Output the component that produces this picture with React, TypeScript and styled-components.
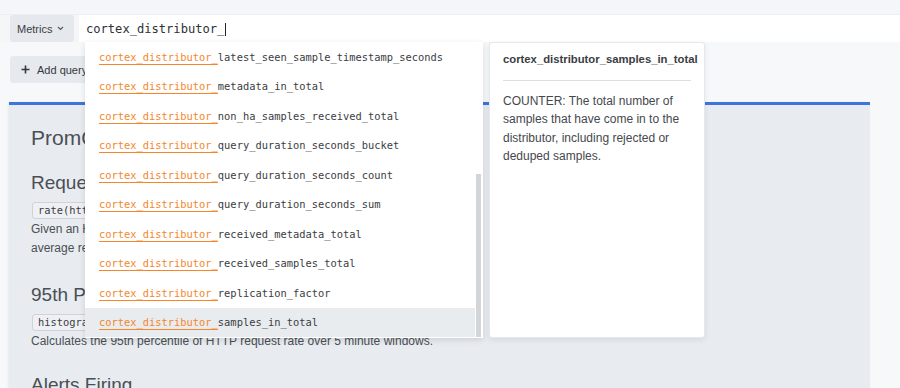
import React from 'react';
import styled, { createGlobalStyle } from 'styled-components';

const GlobalStyle = createGlobalStyle`
  html, body {
    margin: 0;
    padding: 0;
    background: #f6f8fa;
    font-family: "Liberation Sans", Arial, sans-serif;
    overflow: hidden;
  }
`;

const PREFIX = 'cortex_distributor_';

const suggestions = [
  'latest_seen_sample_timestamp_seconds',
  'metadata_in_total',
  'non_ha_samples_received_total',
  'query_duration_seconds_bucket',
  'query_duration_seconds_count',
  'query_duration_seconds_sum',
  'received_metadata_total',
  'received_samples_total',
  'replication_factor',
  'samples_in_total',
];

const Page = styled.div`
  width: 900px;
  height: 388px;
  overflow: hidden;
  background: #f6f8fa;
`;

const TopStrip = styled.div`
  height: 15px;
  background: #f4f6f9;
  border-bottom: 1px solid #eceff2;
  box-sizing: border-box;
`;

const QueryRow = styled.div`
  display: flex;
  height: 27px;
  padding-left: 10px;
  gap: 5px;
  background: #f4f6f8;
`;

const MetricsButton = styled.div`
  display: flex;
  align-items: center;
  gap: 5px;
  width: 64px;
  box-sizing: border-box;
  padding-left: 7px;
  background: #e5e8ec;
  border-radius: 3px;
  font-size: 11px;
  color: #3c4046;
`;

const InputWrap = styled.div`
  position: relative;
  flex: 1;
  background: #fff;
  display: flex;
  align-items: center;
  padding-left: 7px;
`;

const QueryText = styled.div`
  font-family: "DejaVu Sans Mono", monospace;
  font-size: 12.1px;
  color: #2e3136;
  display: flex;
  align-items: center;
`;

const Caret = styled.span`
  display: inline-block;
  width: 1px;
  height: 13px;
  background: #222;
  margin-left: 1px;
  margin-top: 2px;
`;

const Autocomplete = styled.div`
  position: absolute;
  top: 100%;
  left: 6px;
  display: flex;
  gap: 6px;
  z-index: 10;
`;

const SuggestList = styled.div`
  position: relative;
  width: 398px;
  height: 296px;
  background: #fff;
  box-shadow: 0 2px 6px rgba(0, 0, 0, 0.12);
  overflow: hidden;
`;

const Item = styled.div<{ $active?: boolean }>`
  height: 29.5px;
  display: flex;
  align-items: center;
  padding-left: 14px;
  font-family: "DejaVu Sans Mono", monospace;
  font-size: 10.4px;
  color: #3a3d42;
  background: ${(p) => (p.$active ? '#e9ecef' : '#fff')};
  margin-right: 8px;
  white-space: pre;
`;

const Match = styled.span`
  color: #f5862a;
  text-decoration: underline;
  text-decoration-color: #f5862a;
  text-decoration-thickness: 1px;
  text-underline-offset: 3px;
`;

const ScrollThumb = styled.div`
  position: absolute;
  right: 2px;
  top: 132px;
  width: 5px;
  height: 163px;
  background: #d3d6d9;
`;

const InfoCard = styled.div`
  width: 216px;
  height: 296px;
  box-sizing: border-box;
  background: #fff;
  border: 1px solid #e4e7eb;
  border-radius: 3px;
  padding: 8px 13px;
  box-shadow: 0 2px 6px rgba(0, 0, 0, 0.08);
`;

const InfoTitle = styled.div`
  font-size: 11.3px;
  font-weight: 700;
  color: #3a3d42;
  line-height: 17px;
  padding-bottom: 12px;
  border-bottom: 1px solid #dcdfe3;
  white-space: nowrap;
`;

const InfoBody = styled.div`
  margin-top: 11px;
  font-size: 12px;
  line-height: 18.3px;
  color: #45484d;
`;

const ActionBar = styled.div`
  padding: 14px 10px 19px;
`;

const AddQueryButton = styled.div`
  display: inline-flex;
  align-items: center;
  gap: 7px;
  height: 27px;
  padding: 0 14px 0 11px;
  background: #e6e9ed;
  border-radius: 3px;
  font-size: 11px;
  color: #34383d;
`;

const Panel = styled.div`
  margin-left: 9px;
  width: 861px;
  height: 300px;
  box-sizing: border-box;
  background: #e8ecf0;
  border-top: 3px solid #3b76dc;
  box-shadow: -1px 0 2px rgba(0, 0, 0, 0.06);
  padding: 20px 22px;
  color: #4b4f55;
`;

const PanelTitle = styled.h1`
  margin: 0;
  font-size: 21px;
  font-weight: 400;
  line-height: 26px;
`;

const SectionTitle = styled.h2<{ $gap: number }>`
  margin: ${(p) => p.$gap}px 0 8px;
  font-size: 19px;
  font-weight: 400;
  line-height: 23px;
`;

const Code = styled.code`
  display: block;
  width: fit-content;
  font-family: "DejaVu Sans Mono", monospace;
  font-size: 10.4px;
  line-height: 13px;
  padding: 1px 5px;
  border: 1px solid #cfd3d8;
  border-radius: 3px;
  background: #eef0f3;
  color: #3a3d42;
  margin: 0 0 1px 1px;
  white-space: nowrap;
`;

const Text = styled.p`
  margin: 0;
  font-size: 12px;
  line-height: 19px;
`;

function Chevron() {
  return (
    <svg width="7" height="5" viewBox="0 0 7 5" fill="none">
      <path d="M1 1l2.5 2.5L6 1" stroke="#555" strokeWidth="1.1" />
    </svg>
  );
}

function Plus() {
  return (
    <svg width="9" height="9" viewBox="0 0 9 9">
      <path d="M4.5 0.5v8M0.5 4.5h8" stroke="#34383d" strokeWidth="1.6" />
    </svg>
  );
}

export default function App() {
  return (
    <Page>
      <GlobalStyle />
      <TopStrip />
      <QueryRow>
        <MetricsButton>
          Metrics <Chevron />
        </MetricsButton>
        <InputWrap>
          <QueryText>
            {PREFIX}
            <Caret />
          </QueryText>
          <Autocomplete>
            <SuggestList>
              {suggestions.map((s, i) => (
                <Item key={s} $active={i === suggestions.length - 1}>
                  <Match>{PREFIX}</Match>
                  {s}
                </Item>
              ))}
              <ScrollThumb />
            </SuggestList>
            <InfoCard>
              <InfoTitle>cortex_distributor_samples_in_total</InfoTitle>
              <InfoBody>
                COUNTER: The total number of samples that have come in to the distributor, including
                rejected or deduped samples.
              </InfoBody>
            </InfoCard>
          </Autocomplete>
        </InputWrap>
      </QueryRow>
      <ActionBar>
        <AddQueryButton>
          <Plus />
          Add query
        </AddQueryButton>
      </ActionBar>
      <Panel>
        <PanelTitle>PromQL Examples</PanelTitle>
        <SectionTitle $gap={20}>Request Rate</SectionTitle>
        <Code>rate(http_requests_total[5m])</Code>
        <Text>
          Given an HTTP request counter, this query calculates the per-second
          <br />
          average request rate over the last 5 minutes.
        </Text>
        <SectionTitle $gap={25}>95th Percentile of Request Latencies</SectionTitle>
        <Code>histogram_quantile(0.95, rate(request_duration_seconds_bucket[5m]))</Code>
        <Text>Calculates the 95th percentile of HTTP request rate over 5 minute windows.</Text>
        <SectionTitle $gap={22}>Alerts Firing</SectionTitle>
      </Panel>
    </Page>
  );
}
